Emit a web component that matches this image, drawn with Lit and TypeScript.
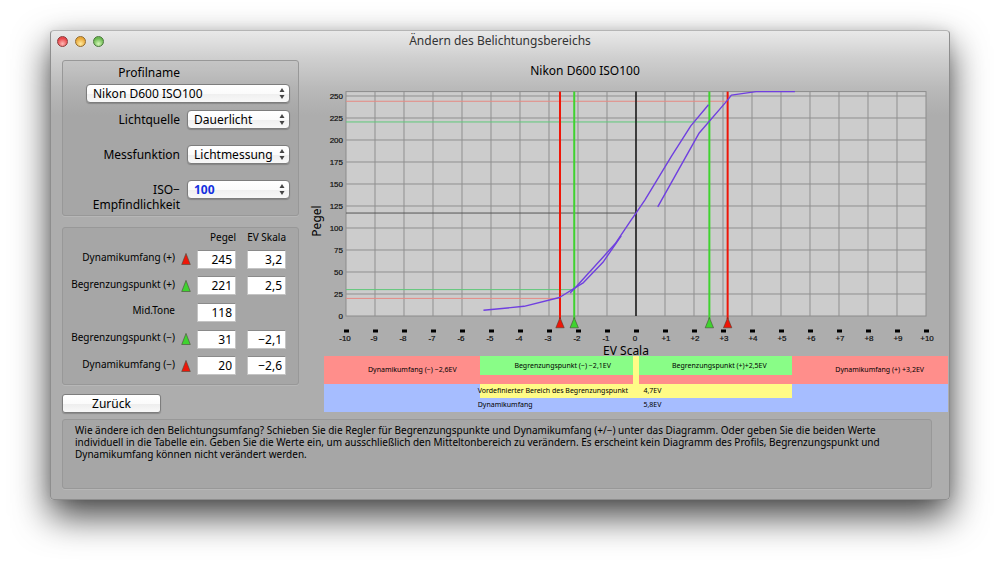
import { LitElement, html, svg, css } from "lit";
import { customElement, property } from "lit/decorators.js";

type Point = [number, number];
type Tone = "red" | "green";

const COLORS: Record<Tone, string> = { red: "#ee1608", green: "#3fd32f" };

// Plot geometry: EV -10..+10 horizontally, level 0..255 vertically.
const px = (ev: number) => 326 + 29 * ev;
const py = (level: number) => 228 - 0.88 * level;

const CURVES: Point[][] = [
  [[-5.26, 6.5], [-3.86, 11], [-2.64, 21], [-1.81, 38], [-1.14, 61], [-0.51, 91]],
  [[-2.27, 26], [-2.04, 34], [-0.72, 82], [-0.17, 109], [0, 117], [0.31, 132], [1.23, 182], [1.89, 216], [2.5, 240]],
  [[0.75, 124], [2.18, 208], [3.15, 245], [3.29, 251], [4.14, 255], [5.48, 255]],
];

const MARKERS: { ev: number; level: number; tone: Tone }[] = [
  { ev: -2.62, level: 20, tone: "red" },
  { ev: -2.13, level: 30, tone: "green" },
  { ev: 2.53, level: 220.5, tone: "green" },
  { ev: 3.16, level: 244, tone: "red" },
];

const ROWS: { id: string; label: string; tone?: Tone; level: string; ev?: string }[] = [
  { id: "dyn-plus", label: "Dynamikumfang (+)", tone: "red", level: "245", ev: "3,2" },
  { id: "lim-plus", label: "Begrenzungspunkt (+)", tone: "green", level: "221", ev: "2,5" },
  { id: "mid", label: "Mid.Tone", level: "118" },
  { id: "lim-minus", label: "Begrenzungspunkt (−)", tone: "green", level: "31", ev: "−2,1" },
  { id: "dyn-minus", label: "Dynamikumfang (−)", tone: "red", level: "20", ev: "−2,6" },
];

@customElement("popup-select")
class PopupSelect extends LitElement {
  @property() label = "";
  @property() value = "";
  @property({ type: Boolean }) accent = false;

  static styles = css`
    :host { display: block; position: relative; }
    .select {
      appearance: none; display: block; box-sizing: border-box; width: 100%; height: 19px;
      margin: 0; padding: 0 12px 0 6px; border: 1px solid #7d7d7d; border-radius: 4px;
      background: linear-gradient(#ffffff, #fbfbfb 50%, #efefef 51%, #f8f8f8);
      box-shadow: 0 1px 1px rgba(0, 0, 0, 0.2);
      font: 12px/17px "Noto Sans", "Open Sans", sans-serif; color: #000;
    }
    .accent { color: #1431e0; font-weight: 700; }
    .arrows { position: absolute; right: 5px; top: 4px; pointer-events: none; }
  `;

  render() {
    return html`
      <select class="select ${this.accent ? "accent" : ""}" aria-label=${this.label}>
        <option>${this.value}</option>
      </select>
      <svg class="arrows" width="6" height="11" viewBox="0 0 6 11" aria-hidden="true">
        <path d="M3 0L5.5 4H.5zM3 11L5.5 7H.5z" fill="#444" />
      </svg>`;
  }
}

@customElement("level-chart")
class LevelChart extends LitElement {
  static styles = css`
    :host { display: block; }
    .chart { display: block; width: 100%; height: auto; overflow: visible; }
    .tick { font: 8px "Liberation Sans", Arial, sans-serif; fill: #111; stroke: #111; stroke-width: 0.2px; }
    .axis { font: 12px "Noto Sans", "Open Sans", sans-serif; fill: #000; }
  `;

  render() {
    const evs = Array.from({ length: 21 }, (_, i) => i - 10);
    const levels = Array.from({ length: 11 }, (_, i) => i * 25);
    const left = px(-10);
    const top = py(255);
    const bottom = py(0);
    return html`
      <svg class="chart" viewBox="0 0 638 268" role="img" aria-label="Pegel / EV Scala">
        <rect x=${left} y=${top} width="580" height=${bottom - top} fill="#cccccc" stroke="#8c8c8c" />
        ${evs.slice(1, -1).map((e) => svg`<path d="M${px(e)} ${top}V${bottom}" stroke="#8f8f8f" />`)}
        ${levels.slice(1).map((l) => svg`<path d="M${left} ${py(l)}H${px(10)}" stroke="#8f8f8f" />`)}
        ${levels.map((l) => svg`<text class="tick" x="33" y=${py(l) + 3} text-anchor="end">${l}</text>`)}
        <path d="M${left} ${py(117)}H${px(0)}" stroke="#555" />
        ${MARKERS.map((m) => svg`<path d="M${left} ${py(m.level)}H${px(m.ev)}"
          stroke=${m.tone === "red" ? "#e58a84" : "#5fc87a"} />`)}
        <path d="M${px(0)} ${top}V${bottom}" stroke="#000" stroke-width="1.3" />
        ${MARKERS.map((m) => svg`
          <path d="M${px(m.ev)} ${top}V${bottom + 3}" stroke=${COLORS[m.tone]} stroke-width="2" />
          <path d="M${px(m.ev)} ${bottom + 1.5}l4.2 10.3h-8.4z" fill=${COLORS[m.tone]} stroke="#3a3a2a" stroke-width=".5" />`)}
        ${CURVES.map((c) => svg`<polyline fill="none" stroke="#6f3fe0" stroke-width="1.4" stroke-linejoin="round"
          points=${c.map(([e, l]) => `${px(e)},${py(l)}`).join(" ")} />`)}
        ${evs.map((e) => svg`
          <rect x=${px(e) - 2} y="241.5" width="5" height="3" fill="#000" />
          <text class="tick" x=${px(e) - 1 + (e > 0 ? 2 : 0)} y="253" text-anchor="middle">${e > 0 ? "+" + e : e}</text>`)}
        <text class="axis" x="316" y="267" text-anchor="middle">EV Scala</text>
        <text class="axis" x="11" y="133" text-anchor="middle" transform="rotate(-90 11 133)">Pegel</text>
      </svg>`;
  }
}

@customElement("app-root")
class AppRoot extends LitElement {
  static styles = css`
    :host {
      display: block; box-sizing: border-box; min-height: 100vh; padding: 30px 50px 40px;
      background: #fff; color: #000; font: 12px/16px "Noto Sans", "Open Sans", sans-serif;
    }
    .window {
      border: 1px solid #8e8e8e; border-top-color: #b5b5b5; border-radius: 4px;
      background: linear-gradient(#e9e9e9, #d0d0d0 26px, #b9b9b9 58px, #adadad 84px, #adadad);
      box-shadow: 0 16px 36px rgba(0, 0, 0, 0.75), 0 0 12px rgba(0, 0, 0, 0.08);
    }
    .titlebar {
      display: grid; grid-template-columns: 1fr auto 1fr; align-items: center;
      height: 20px; padding: 0 6px; margin-bottom: 9px;
    }
    .lights { display: flex; gap: 7px; }
    .light { width: 11px; height: 11px; padding: 0; border: 1px solid; border-radius: 50%; }
    .close { border-color: #8b3a39; background: radial-gradient(circle at 50% 75%, #ffb9b5, #e8474b 65%); }
    .minimize { border-color: #92692a; background: radial-gradient(circle at 50% 75%, #ffeaa0, #e9a93a 65%); }
    .zoom { border-color: #48763a; background: radial-gradient(circle at 50% 75%, #d5f7b8, #6dba52 65%); }
    .caption { margin: 0; font-size: 12px; font-weight: 400; color: #333; }
    .body { display: grid; grid-template-columns: 237px minmax(0, 1fr); gap: 11px; padding: 0 1px 6px 11px; }
    .side { display: flex; flex-direction: column; gap: 11px; }
    .panel {
      box-sizing: border-box; border: 1px solid #989898; border-radius: 3px;
      background: rgba(0, 0, 0, 0.035); box-shadow: 0 1px 0 rgba(255, 255, 255, 0.12);
    }
    .profile { padding: 3px 8px 3px 0; }
    .field { display: grid; grid-template-columns: 117px 1fr; column-gap: 7px; margin-bottom: 16px; line-height: 15px; text-align: right; }
    .field:last-child { margin-bottom: 0; }
    .field span { padding-top: 2px; }
    .name { display: block; width: 117px; line-height: 17px; text-align: right; }
    .wide { margin: 3px 0 7px 23px; }
    .values { padding: 0 12px 5px 0; }
    .table { width: 100%; height: 151px; border-collapse: collapse; table-layout: fixed; font-size: 10px; line-height: 14px; }
    .table th { padding: 0; font-weight: 400; text-align: right; vertical-align: middle; }
    .table td { padding: 0; text-align: right; }
    .table thead th { height: 18px; white-space: nowrap; }
    .table tbody th { padding-bottom: 4px; white-space: nowrap; }
    .c-label { width: 112px; }
    .c-mark { width: 22px; }
    .c-level { width: 39px; }
    .table .mark { text-align: center; }
    .tri { display: block; margin: 0 auto; }
    .num {
      display: block; box-sizing: border-box; width: 39px; height: 19px; margin-left: auto; padding: 0 3px 0 0;
      border: 1px solid #c4c4c4; border-top-color: #8a8a8a; background: #fff;
      font: 12px/17px "Noto Sans", "Open Sans", sans-serif; text-align: right;
    }
    .back {
      width: 99px; height: 19px; margin-top: -2px; padding: 0; border: 1px solid #7d7d7d; border-radius: 3px;
      background: linear-gradient(#ffffff, #fbfbfb 50%, #ededed 51%, #f8f8f8);
      box-shadow: 0 1px 1px rgba(0, 0, 0, 0.2);
      font: 12px/17px "Noto Sans", "Open Sans", sans-serif; color: #000;
    }
    .heading { margin: 0; height: 28px; padding-top: 3px; box-sizing: border-box; font-size: 12px; line-height: 16px; font-weight: 400; padding-right: 88px; text-align: center; }
    .strips {
      display: grid; grid-template-columns: 156fr 153fr 7fr 153fr 156fr; grid-template-rows: 19px 9px 14px 14px;
      margin-left: 14px; font-size: 7px; line-height: 14px; white-space: nowrap;
    }
    .outer { grid-area: 1 / 1 / 3 / 6; background: #ff8e8b; display: flex; justify-content: space-between; align-items: center; padding: 0 24px 0 44px; }
    .limit { background: #89fd87; text-align: center; line-height: 19px; }
    .low { grid-area: 1 / 2; padding-left: 13px; }
    .high { grid-area: 1 / 4; padding-left: 7px; }
    .mid { grid-area: 1 / 3 / 3 / 4; background: #fffb86; }
    .range { grid-area: 3 / 1 / 5 / 6; background: #a6bdff; }
    .preset { grid-area: 3 / 2 / 4 / 5; background: #fffb86; }
    .key { grid-column: 2; margin-left: -2px; }
    .val { grid-column: 4; padding-left: 4px; }
    .r3 { grid-row: 3; }
    .r4 { grid-row: 4; }
    .help { min-height: 70px; margin: 0 17px 10px 11px; padding: 4px 12px; font-size: 10px; line-height: 12px; }
    .help p { margin: 0; }
  `;

  private triangle(tone: Tone) {
    return html`<svg class="tri" width="10" height="12" viewBox="0 0 10 12" aria-hidden="true">
      <path d="M5 .4L9.3 11.5H.7z" fill=${COLORS[tone]} stroke="#4a4a3a" stroke-width=".6" />
    </svg>`;
  }

  render() {
    return html`
      <main class="window">
        <header class="titlebar">
          <div class="lights">
            <button class="light close" aria-label="Schließen"></button>
            <button class="light minimize" aria-label="Minimieren"></button>
            <button class="light zoom" aria-label="Zoomen"></button>
          </div>
          <h1 class="caption">Ändern des Belichtungsbereichs</h1>
        </header>
        <div class="body">
          <div class="side">
            <section class="panel profile">
              <span class="name">Profilname</span>
              <popup-select class="wide" label="Profilname" value="Nikon D600 ISO100"></popup-select>
              <div class="field"><span>Lichtquelle</span><popup-select label="Lichtquelle" value="Dauerlicht"></popup-select></div>
              <div class="field"><span>Messfunktion</span><popup-select label="Messfunktion" value="Lichtmessung"></popup-select></div>
              <div class="field"><span>ISO−<br />Empfindlichkeit</span><popup-select label="ISO-Empfindlichkeit" value="100" accent></popup-select></div>
            </section>
            <section class="panel values">
              <table class="table">
                <colgroup><col class="c-label" /><col class="c-mark" /><col class="c-level" /><col /></colgroup>
                <thead><tr><td></td><td></td><th scope="col">Pegel</th><th scope="col">EV Skala</th></tr></thead>
                <tbody>
                  ${ROWS.map((r) => html`<tr>
                    <th scope="row"><label for=${r.id}>${r.label}</label></th>
                    <td class="mark">${r.tone ? this.triangle(r.tone) : ""}</td>
                    <td><input class="num" id=${r.id} .value=${r.level} /></td>
                    <td>${r.ev ? html`<input class="num" aria-label="${r.label} EV Skala" .value=${r.ev} />` : ""}</td>
                  </tr>`)}
                </tbody>
              </table>
            </section>
            <button class="back">Zurück</button>
          </div>
          <section>
            <h2 class="heading">Nikon D600 ISO100</h2>
            <level-chart></level-chart>
            <div class="strips">
              <div class="outer"><span>Dynamikumfang (−) −2,6EV</span><span>Dynamikumfang (+) +3,2EV</span></div>
              <div class="limit low">Begrenzungspunkt (−) −2,1EV</div>
              <div class="limit high">Begrenzungspunkt (+)+2,5EV</div>
              <div class="mid"></div>
              <div class="range"></div>
              <div class="preset"></div>
              <span class="key r3">Vordefinierter Bereich des Begrenzungspunkt</span><span class="val r3">4,7EV</span>
              <span class="key r4">Dynamikumfang</span><span class="val r4">5,8EV</span>
            </div>
          </section>
        </div>
        <section class="panel help">
          <p>Wie ändere ich den Belichtungsumfang? Schieben Sie die Regler für Begrenzungspunkte und Dynamikumfang (+/−) unter das Diagramm. Oder geben Sie die beiden Werte individuell in die Tabelle ein. Geben Sie die Werte ein, um ausschließlich den Mitteltonbereich zu verändern. Es erscheint kein Diagramm des Profils, Begrenzungspunkt und Dynamikumfang können nicht verändert werden.</p>
        </section>
      </main>`;
  }
}
